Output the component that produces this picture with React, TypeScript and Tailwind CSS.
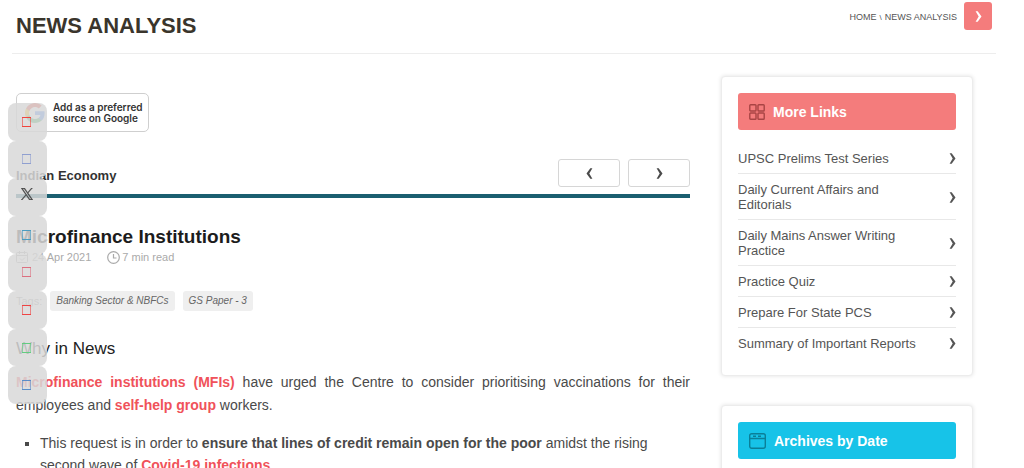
import type { ReactNode } from "react";

type IconProps = { className?: string };

const shareLinks = [
  { name: "YouTube", color: "text-[#f0443c]" },
  { name: "Facebook", color: "text-[#8f9fd0]" },
  { name: "X", color: "text-[#444444]" },
  { name: "LinkedIn", color: "text-[#4a9cc0]" },
  { name: "Instagram", color: "text-[#dc7080]" },
  { name: "Pinterest", color: "text-[#ee4444]" },
  { name: "WhatsApp", color: "text-[#62cc80]" },
  { name: "Telegram", color: "text-[#5a8cc8]" },
];

const moreLinks = [
  "UPSC Prelims Test Series",
  "Daily Current Affairs and Editorials",
  "Daily Mains Answer Writing Practice",
  "Practice Quiz",
  "Prepare For State PCS",
  "Summary of Important Reports",
];

function BoxGlyph() {
  return (
    <svg aria-hidden="true" width="10" height="12" viewBox="0 0 10 12" fill="none" stroke="currentColor">
      <path d="M0 1.500h9M0 10.500h9" />
      <path d="M.5 2v8M8.500 2v8" opacity=".6" />
    </svg>
  );
}

function XGlyph() {
  return (
    <svg aria-hidden="true" width="12" height="12" viewBox="0 0 24 24" fill="currentColor">
      <path d="M14.23 10.16 22.98 0h-2.07l-7.6 8.82L7.25 0H.25l9.18 13.34L.25 24h2.07l8.02-9.32L16.75 24h7l-9.52-13.84zm-2.84 3.3-.93-1.33L3.07 1.56h3.18l5.97 8.53.93 1.33 7.76 11.08h-3.18l-6.34-9.04z" stroke="currentColor" strokeWidth=".8" />
    </svg>
  );
}

function GoogleGlyph() {
  return (
    <svg aria-hidden="true" width="20" height="20" viewBox="0 0 24 24" className="shrink-0">
      <path fill="#4285F4" d="M23.5 12.3c0-.8-.1-1.6-.2-2.3H12v4.500h6.500a5.500 5.500 0 0 1-2.400 3.600v3h3.900c2.200-2 3.500-5.100 3.500-8.800z" />
      <path fill="#34A853" d="M12 24c3.200 0 6-1.100 8-2.900l-3.900-3c-1.100.7-2.500 1.200-4.100 1.200-3.100 0-5.800-2.100-6.700-5H1.300v3.100A12 12 0 0 0 12 24z" />
      <path fill="#FBBC05" d="M5.300 14.300a7.200 7.200 0 0 1 0-4.600V6.600h-4a12 12 0 0 0 0 10.800z" />
      <path fill="#EA4335" d="M12 4.800c1.800 0 3.300.6 4.600 1.800L20 3.100A12 12 0 0 0 1.300 6.600l4 3.100c.9-2.900 3.600-4.900 6.700-4.900z" />
    </svg>
  );
}

function Chevron({ className = "" }: IconProps) {
  return (
    <svg aria-hidden="true" width="7" height="11" viewBox="0 0 7 11" fill="currentColor" className={`shrink-0 ${className}`}>
      <path d="M.6.300H2.700L6.500 5.500 2.700 10.700H.6L3.700 5.500z" />
    </svg>
  );
}

function GridGlyph() {
  return (
    <svg aria-hidden="true" width="16" height="16" viewBox="0 0 16 16" fill="none" stroke="currentColor" strokeWidth="1.400">
      <rect x=".8" y=".8" width="6.200" height="6.200" rx=".8" />
      <rect x="9" y=".8" width="6.200" height="6.200" rx=".8" />
      <rect x=".8" y="9" width="6.200" height="6.200" rx=".8" />
      <rect x="9" y="9" width="6.200" height="6.200" rx=".8" />
    </svg>
  );
}

function WindowGlyph() {
  return (
    <svg aria-hidden="true" width="17" height="16" viewBox="0 0 17 16" fill="none" stroke="currentColor" strokeWidth="1.400">
      <rect x=".7" y=".7" width="15.600" height="14.600" rx="2" />
      <path d="M.7 5.500h15.600M4 3.200h3M9 3.200h3" />
    </svg>
  );
}

function CalendarGlyph() {
  return (
    <svg aria-hidden="true" width="12" height="12" viewBox="0 0 12 12" fill="none" stroke="currentColor">
      <rect x=".5" y="1.500" width="11" height="10" rx="1" />
      <path d="M.5 4.500h11M3.500 0v3M8.500 0v3M4 7.500l2 2 3-3" />
    </svg>
  );
}

function ClockGlyph() {
  return (
    <svg aria-hidden="true" width="13" height="13" viewBox="0 0 13 13" fill="none" stroke="currentColor" strokeWidth="1.200">
      <circle cx="6.500" cy="6.500" r="5.800" />
      <path d="M6.500 3v4H9.500" />
    </svg>
  );
}

function Panel({ title, icon, tone, children }: { title: string; icon: ReactNode; tone: string; children?: ReactNode }) {
  return (
    <section className="rounded-sm border border-[#ececec] bg-white px-4 py-4 shadow-[0_0_4px_rgba(0,0,0,0.12)]">
      <h2 className={`flex h-[37px] items-center gap-2 rounded-[3px] px-[11px] text-sm font-bold ${tone}`}>
        {icon}
        <span className="text-white">{title}</span>
      </h2>
      {children}
    </section>
  );
}

function Share() {
  return (
    <nav aria-label="Share" className="fixed top-[103px] left-2 z-10 grid h-[301px] w-[39px] grid-rows-8">
      {shareLinks.map((link) => (
        <a
          key={link.name}
          href="#"
          aria-label={link.name}
          className={`flex items-center justify-center rounded-lg bg-[#d8d8d8]/85 pr-[2px] ${link.name === "X" ? "pb-[6px]" : ""} ${link.color}`}
        >
          {link.name === "X" ? <XGlyph /> : <BoxGlyph />}
        </a>
      ))}
    </nav>
  );
}

function Keyword({ children }: { children: ReactNode }) {
  return (
    <a href="#" className="font-bold text-[#f0525a]">
      {children}
    </a>
  );
}

export default function App() {
  return (
    <div className="h-screen overflow-hidden bg-white font-['Liberation_Sans',Arial,sans-serif] text-[#4a4a4a]">
      <Share />
      <header className="mr-7 ml-3 flex h-[54px] items-start justify-between border-b border-[#ededed] pr-1 pl-1">
        <h1 className="pt-3 text-[22px] leading-7 font-bold text-[#3a352c]">NEWS ANALYSIS</h1>
        <nav aria-label="Breadcrumb" className="flex items-center pt-[2px] text-[9px] text-[#555555]">
          <div className="flex items-center gap-[3px] pt-[3px]">
            <a href="#">HOME</a>
            <span className="text-[8px]">\</span>
            <span>NEWS ANALYSIS</span>
          </div>
          <button aria-label="Next" className="ml-[7px] flex h-7 w-7 items-center justify-center rounded-[3px] bg-[#f47c7c] text-white">
            <Chevron />
          </button>
        </nav>
      </header>

      <div className="flex items-start gap-[31px] pt-[22px] pr-[51px] pl-4">
        <main className="min-w-0 flex-1 pt-[17px]">
          <a
            href="#"
            className="flex h-[39px] w-[133px] items-center gap-2 rounded-[5px] border border-[#cfcfcf] pl-2 font-[Inter,sans-serif] text-[10px] leading-[11px] font-semibold whitespace-nowrap text-[#333333]"
          >
            <GoogleGlyph />
            <span>
              Add as a preferred
              <br />
              source on Google
            </span>
          </a>

          <div className="mt-[27px] flex items-center justify-between border-b-4 border-[#1a5f70] pb-[7px]">
            <span className="pt-[6px] text-[13px] leading-5 font-bold text-[#333333]">Indian Economy</span>
            <div className="flex gap-2">
              <button aria-label="Previous article" className="flex h-7 w-[62px] items-center justify-center rounded-[3px] border border-[#d6d6d6]">
                <Chevron className="rotate-180" />
              </button>
              <button aria-label="Next article" className="flex h-7 w-[62px] items-center justify-center rounded-[3px] border border-[#d6d6d6]">
                <Chevron />
              </button>
            </div>
          </div>

          <article>
            <h2 className="pt-[27px] text-[19px] leading-6 font-bold text-[#1c1c1c]">Microfinance Institutions</h2>
            <div className="flex items-center gap-4 text-[11px] leading-4 text-[#aaaaaa]">
              <span className="flex items-center gap-1">
                <CalendarGlyph />
                24 Apr 2021
              </span>
              <span className="flex items-center gap-[2px]">
                <ClockGlyph />7 min read
              </span>
            </div>
            <div className="mt-[26px] flex items-center gap-2 text-[10px] leading-5 text-[#666666]">
              <span className="text-[11px] text-[#999999]">Tags:</span>
              <a href="#" className="rounded-[3px] bg-[#efefef] px-[6px] italic">Banking Sector &amp; NBFCs</a>
              <a href="#" className="rounded-[3px] bg-[#efefef] px-[6px] italic">GS Paper - 3</a>
            </div>
            <h3 className="pt-[26px] text-[17px] leading-6 text-[#222222]">Why in News</h3>
            <p className="mt-[10px] text-justify text-sm leading-[23px]">
              <Keyword>Microfinance institutions (MFIs)</Keyword> have urged the Centre to consider prioritising
              vaccinations for their employees and <Keyword>self-help group</Keyword> workers.
            </p>
            <ul className="mt-[15px] list-[square] pl-6 text-sm leading-[22px]">
              <li>
                This request is in order to <strong>ensure that lines of credit remain open for the poor</strong> amidst
                the rising second wave of <Keyword>Covid-19 infections</Keyword>.
              </li>
            </ul>
          </article>
        </main>

        <aside className="flex w-[252px] shrink-0 flex-col gap-[29px]">
          <Panel title="More Links" tone="bg-[#f47c7c] text-[#a84444]" icon={<GridGlyph />}>
            <ul className="pt-[13px] pb-px text-[13px] leading-[15px] text-[#555555]">
              {moreLinks.map((label) => (
                <li key={label} className="border-t border-[#e8e8e8] first:border-t-0">
                  <a href="#" className="flex items-center justify-between pt-2 pb-[7px]">
                    <span className="max-w-[180px]">{label}</span>
                    <Chevron />
                  </a>
                </li>
              ))}
            </ul>
          </Panel>
          <Panel title="Archives by Date" tone="bg-[#17c3e8] text-[#0b7f98]" icon={<WindowGlyph />} />
        </aside>
      </div>
    </div>
  );
}
